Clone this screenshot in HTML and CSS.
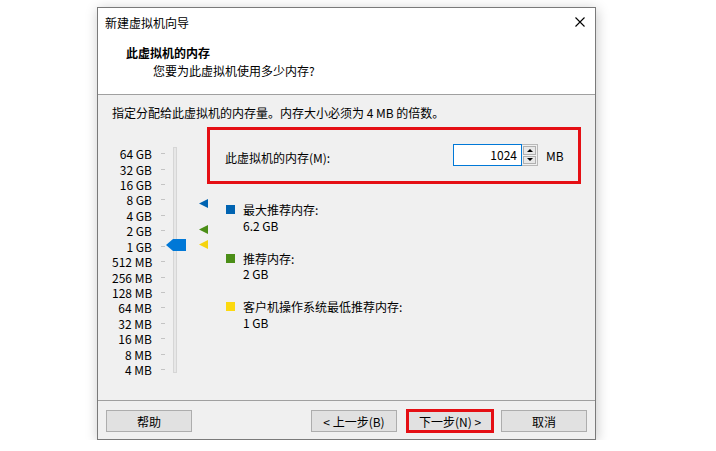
FILE: index.html
```html
<!DOCTYPE html>
<html lang="zh-CN">
<head>
    <meta charset="UTF-8">
    <meta name="viewport" content="width=device-width, initial-scale=1.0">
    <title>新建虚拟机向导</title>
    <link rel="stylesheet" href="styles.css">
</head>
<body>
    <div class="dialog">
        <div class="titlebar">
            <span>新建虚拟机向导</span>
            <svg class="close" width="10" height="10" viewBox="0 0 10 10">
                <path d="M0.5 0.5 L9.5 9.5 M9.5 0.5 L0.5 9.5" stroke="#000" stroke-width="1.1" fill="none"/>
            </svg>
        </div>

        <div class="header">
            <div class="heading">此虚拟机的内存</div>
            <div class="subheading">您要为此虚拟机使用多少内存?</div>
        </div>

        <div class="body">
            <p class="intro">指定分配给此虚拟机的内存量。内存大小必须为 4 MB 的倍数。</p>

            <div class="content">
                <div class="scale">
                    <ul class="labels">
                        <li><span>64 GB</span><i class="tick"></i></li>
                        <li><span>32 GB</span><i class="tick"></i></li>
                        <li><span>16 GB</span><i class="tick"></i></li>
                        <li><span>8 GB</span><i class="tick"></i></li>
                        <li><span>4 GB</span><i class="tick"></i></li>
                        <li><span>2 GB</span><i class="tick"></i></li>
                        <li><span>1 GB</span><i class="tick"></i></li>
                        <li><span>512 MB</span><i class="tick"></i></li>
                        <li><span>256 MB</span><i class="tick"></i></li>
                        <li><span>128 MB</span><i class="tick"></i></li>
                        <li><span>64 MB</span><i class="tick"></i></li>
                        <li><span>32 MB</span><i class="tick"></i></li>
                        <li><span>16 MB</span><i class="tick"></i></li>
                        <li><span>8 MB</span><i class="tick"></i></li>
                        <li><span>4 MB</span><i class="tick"></i></li>
                    </ul>
                    <div class="track"></div>
                    <div class="thumb" style="top: 117px;"></div>
                    <div class="marker marker-max" style="top: 77px;"></div>
                    <div class="marker marker-rec" style="top: 103px;"></div>
                    <div class="marker marker-min" style="top: 118px;"></div>
                </div>

                <div class="panel">
                    <div class="memory-box">
                        <span class="memory-label">此虚拟机的内存(M):</span>
                        <div class="spin">
                            <div class="spin-value">1024</div>
                            <div class="spin-buttons">
                                <div class="spin-btn"><i class="arrow-up"></i></div>
                                <div class="spin-btn"><i class="arrow-down"></i></div>
                            </div>
                        </div>
                        <span class="unit">MB</span>
                    </div>

                    <ul class="legend">
                        <li>
                            <i class="swatch swatch-max"></i>
                            <div>
                                <div class="legend-name">最大推荐内存:</div>
                                <div class="legend-value">6.2 GB</div>
                            </div>
                        </li>
                        <li>
                            <i class="swatch swatch-rec"></i>
                            <div>
                                <div class="legend-name">推荐内存:</div>
                                <div class="legend-value">2 GB</div>
                            </div>
                        </li>
                        <li>
                            <i class="swatch swatch-min"></i>
                            <div>
                                <div class="legend-name">客户机操作系统最低推荐内存:</div>
                                <div class="legend-value">1 GB</div>
                            </div>
                        </li>
                    </ul>
                </div>
            </div>
        </div>

        <div class="footer">
            <button class="btn">帮助</button>
            <div class="nav">
                <button class="btn btn-back">&lt; 上一步(B)</button>
                <button class="btn btn-next">下一步(N) &gt;</button>
                <button class="btn">取消</button>
            </div>
        </div>
    </div>
</body>
</html>
```

FILE: styles.css
```css
body {
    margin: 0;
    background-color: #ffffff;
    font-family: "Noto Sans CJK SC", "Noto Sans", sans-serif;
    font-size: 12px;
    color: #000;
}

.dialog {
    box-sizing: border-box;
    width: 499px;
    height: 433px;
    margin: 7px 0 0 97px;
    border: 1px solid #7a7a7a;
    background-color: #f0f0f0;
    box-shadow: 1px 2px 12px rgba(0, 0, 0, 0.22);
    display: flex;
    flex-direction: column;
}

.titlebar {
    height: 29px;
    padding: 0 10px 0 7px;
    background-color: #fff;
    display: flex;
    align-items: center;
    justify-content: space-between;
}

.close {
    display: block;
    margin-top: -2px;
}

.header {
    background-color: #fff;
    padding: 7px 0 14px 28px;
    border-bottom: 1px solid #a0a0a0;
    line-height: 18px;
}

.heading {
    font-weight: 700;
}

.subheading {
    margin-left: 27px;
}

.body {
    flex: 1;
    padding: 9px 14px 0 14px;
}

.intro {
    margin: 0;
    line-height: 18px;
}

.content {
    display: flex;
}

/* memory scale */
.scale {
    position: relative;
    width: 95px;
    display: flex;
    align-items: flex-start;
}

.labels {
    list-style: none;
    margin: 0;
    padding: 24px 0 0 0;
}

.labels li {
    display: flex;
    align-items: center;
    height: 15.43px;
}

.labels span {
    width: 40px;
    text-align: right;
    white-space: nowrap;
    line-height: 15px;
}

.tick {
    width: 4px;
    height: 1px;
    margin-left: 9px;
    background-color: #c4c4c4;
}

.track {
    box-sizing: border-box;
    width: 4px;
    height: 226px;
    margin: 25px 0 0 8px;
    border: 1px solid #d6d6d6;
    background-color: #e7e7e7;
}

.thumb {
    position: absolute;
    left: 54px;
    width: 20px;
    height: 12px;
    background-color: #0078d7;
    clip-path: polygon(0 50%, 35% 0, 100% 0, 100% 100%, 35% 100%);
}

.marker {
    position: absolute;
    left: 87px;
    width: 9px;
    height: 9px;
    clip-path: polygon(0 50%, 100% 0, 100% 100%);
}

.marker-max { background-color: #0063b1; }
.marker-rec { background-color: #4b8e17; }
.marker-min { background-color: #f5d30f; }

/* right side */
.panel {
    flex: 1;
    padding-top: 5px;
}

.memory-box {
    box-sizing: border-box;
    width: 374px;
    height: 57px;
    border: 3px solid #e50f14;
    padding-left: 15px;
    display: flex;
    align-items: center;
}

.memory-label {
    flex: 1;
    padding-top: 3px;
}

.spin {
    display: flex;
    margin-top: -1px;
}

.spin-value {
    box-sizing: border-box;
    width: 69px;
    height: 22px;
    border: 1px solid #0078d7;
    background-color: #fff;
    text-align: right;
    padding-right: 4px;
    line-height: 20px;
}

.spin-buttons {
    box-sizing: border-box;
    width: 16px;
    height: 22px;
    border: 1px solid #b9b9b9;
    border-left: none;
    display: flex;
    flex-direction: column;
    background-color: #f0f0f0;
}

.spin-btn {
    flex: 1;
    margin: 1px;
    border: 1px solid #b0b0b0;
    background-color: #e8e8e8;
    display: flex;
    align-items: center;
    justify-content: center;
}

.spin-btn + .spin-btn {
    margin-top: 0;
}

.arrow-up,
.arrow-down {
    width: 0;
    height: 0;
    border-left: 3px solid transparent;
    border-right: 3px solid transparent;
}

.arrow-up { border-bottom: 3px solid #000; }
.arrow-down { border-top: 3px solid #000; }

.unit {
    width: 32px;
    margin-left: 8px;
}

.legend {
    list-style: none;
    margin: 18px 0 0 0;
    padding: 0 0 0 19px;
    display: flex;
    flex-direction: column;
    gap: 18px;
}

.legend li {
    display: flex;
    align-items: flex-start;
}

.legend-name,
.legend-value {
    height: 15px;
    line-height: 15px;
}

.legend-value {
    margin-top: 0.5px;
}

.swatch {
    width: 9px;
    height: 9px;
    margin: 3px 8px 0 0;
}

.swatch-max { background-color: #0063b1; }
.swatch-rec { background-color: #4b8e17; }
.swatch-min { background-color: #fcd90f; }

/* buttons */
.footer {
    height: 39px;
    box-sizing: border-box;
    border-top: 1px solid #a0a0a0;
    padding: 9px 8px 0 8px;
    display: flex;
    justify-content: space-between;
    align-items: flex-start;
}

.nav {
    display: flex;
    gap: 8px;
}

.btn {
    box-sizing: border-box;
    width: 86px;
    height: 22px;
    padding: 0;
    border: 1px solid #adadad;
    background-color: #e1e1e1;
    font-family: inherit;
    font-size: 12px;
    color: #000;
}

.btn-back {
    margin-right: 2px;
}

.btn-next {
    outline: 3px solid #e50f14;
    outline-offset: -2px;
}
```
